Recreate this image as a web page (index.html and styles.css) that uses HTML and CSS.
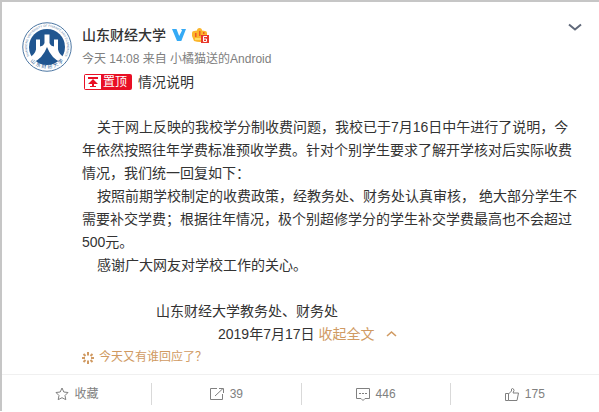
FILE: index.html
```
<!DOCTYPE html>
<html lang="zh-CN">
<head>
  <meta charset="UTF-8">
  <meta name="viewport" content="width=device-width, initial-scale=1">
  <title>山东财经大学</title>
  <link rel="stylesheet" href="styles.css">
</head>
<body>

  <article class="card">
    <div class="feed">
      <a class="avatar" href="#" aria-label="山东财经大学">
        <svg width="50" height="50" viewBox="0 0 100 100">
          <defs>
            <path id="ring-top" d="M15 69A40 40 0 1 1 85 69"/>
            <path id="ring-bottom" d="M8 64A45 45 0 0 0 92 64"/>
          </defs>
          <circle cx="50" cy="50" r="48.500" fill="#fff" stroke="#4d77a3" stroke-width="2"/>
          <circle cx="50" cy="50" r="36" fill="#205690"/>
          <path fill="#fff" d="M45 25h10v17q2 6 9 7V35h8v20q2 10 14 17l-7 10Q58 72 50 50 42 72 21 82l-7-10q12-7 14-17V35h8v14q7-1 9-7z"/>
          <text class="seal-en"><textPath href="#ring-top" startOffset="50%">SHANDONG UNIVERSITY OF FINANCE AND ECONOMICS</textPath></text>
          <text class="seal-cn"><textPath href="#ring-bottom" startOffset="50%">山 东 财 经 大 学</textPath></text>
        </svg>
      </a>

      <div class="detail">
        <header class="author">
          <a class="name" href="#">山东财经大学</a>
          <svg class="verified" width="14" height="12" viewBox="0 0 14 12">
            <path fill="#35aaf5" d="M0 0h4.500l2.700 7L10 1.500 9 0h5L9.300 12H5z"/>
          </svg>
          <svg class="crown" width="17" height="15" viewBox="0 0 17 15">
            <path fill="#fbb62c" d="M2 13 0 8V5q0-2 2-2l3-.500Q5 0 7.500 0T10 2.500l3 .500q2 0 2 2v3l-2 5q-5 2-11 0z"/>
            <path fill="#ef5a25" d="M3 5h1.500v4H3zM7 3h1.500v5H7zM11 4h1.500v2H11z"/>
            <path fill="#ffdc65" d="M3 10h6v2H3z"/>
            <path fill="#e8392c" d="M9 7h8v8H9z"/>
            <path fill="none" stroke="#fff" d="M15 8.500h-3.500v5h3v-2.500h-3"/>
          </svg>
          <button class="more" type="button" aria-label="更多">
            <svg width="14" height="9" viewBox="0 0 14 9">
              <path fill="none" stroke="#60697a" stroke-width="2" d="M1 1.500l6 5 6-5"/>
            </svg>
          </button>
        </header>

        <p class="meta"><a href="#">今天 14:08</a> 来自 <a href="#">小橘猫送的Android</a></p>

        <div class="content">
          <h1 class="title">
            <span class="pinned">
              <svg width="16" height="14" viewBox="0 0 16 14">
                <path fill="#fff" d="M0 0h16v14H0z"/>
                <path fill="#e90f25" d="M3 2h10v2H3zM8 4l5 5H9v2h2v1H5v-1h2V9H3z"/>
              </svg>
              <span class="pinned-text">置顶</span>
            </span>
            情况说明
          </h1>
          <p>关于网上反映的我校学分制收费问题，我校已于7月16日中午进行了说明，今年依然按照往年学费标准预收学费。针对个别学生要求了解开学核对后实际收费情况，我们统一回复如下：</p>
          <p>按照前期学校制定的收费政策，经教务处、财务处认真审核， 绝大部分学生不需要补交学费；根据往年情况，极个别超修学分的学生补交学费最高也不会超过500元。</p>
          <p>感谢广大网友对学校工作的关心。</p>
          <p class="signature">山东财经大学教务处、财务处</p>
          <p class="date">2019年7月17日
            <a class="fold" href="#">收起全文
              <svg width="11" height="7" viewBox="0 0 11 7">
                <path fill="none" stroke="#d09a62" stroke-width="1.600" d="M1 6l4.500-4L10 6"/>
              </svg>
            </a>
          </p>
        </div>

        <a class="replies" href="#">
          <svg width="12" height="12" viewBox="0 0 12 12">
            <path fill="none" stroke="#d09a62" stroke-width="2" d="M6 0v3.500M6 8.500V12M1.500 2l2 2M10.500 2l-2 2M0 6h3M9 6h3M1.500 10l2-2M10.500 10l-2-2"/>
          </svg>
          今天又有谁回应了？
        </a>
      </div>
    </div>

    <footer class="actions">
      <button type="button">
        <svg width="14" height="14" viewBox="0 0 14 14">
          <path d="M7 1l1.800 4 4.200.500-3 3 .800 4.200L7 10.700l-3.800 2L4 8.500l-3-3L5.200 5z"/>
        </svg>
        收藏
      </button>
      <button type="button" aria-label="转发 39">
        <svg width="14" height="12" viewBox="0 0 14 12">
          <path d="M7 .500H.500v11h12V6M5 8l8-7.500M9 .500h4.500V5"/>
        </svg>
        39
      </button>
      <button type="button" aria-label="评论 446">
        <svg width="14" height="13" viewBox="0 0 14 13">
          <path d="M.500.500h13v10H9l-2 2-2-2H.500zM3 5.500h2M6 5.500h2M9 5.500h2"/>
        </svg>
        446
      </button>
      <button type="button" aria-label="赞 175">
        <svg width="14" height="13" viewBox="0 0 14 13">
          <path d="M.500 5.500h3v7h-3zM3.500 6l3-3V1q1-1 2 0l.500 1.500L8 5h5.500L12 12.500H3.500"/>
        </svg>
        175
      </button>
    </footer>
  </article>

</body>
</html>
```
FILE: styles.css
```
* {
  box-sizing: border-box;
}

body {
  margin: 0;
  font-family: "Liberation Sans", "Noto Sans CJK SC", sans-serif;
  font-size: 14px;
  line-height: 23px;
  color: #333;
  background-color: #fff;
}

a {
  color: inherit;
  text-decoration: none;
}

button {
  padding: 0;
  border: 0;
  background: none;
  font: inherit;
  color: inherit;
  cursor: pointer;
}

h1, p {
  margin: 0;
}

svg {
  flex: none;
  overflow: visible;
}

.card {
  border-top: 2px solid #c6c6c6;
  border-left: 2px solid #c6c6c6;
}

.feed {
  display: flex;
  gap: 10px;
  padding: 20px 17px 5px 20px;
}

.avatar {
  flex: none;
  width: 50px;
  height: 50px;
}

.seal-en,
.seal-cn {
  text-anchor: middle;
}

.seal-en {
  font-size: 6px;
  fill: #5479a3;
}

.seal-cn {
  font-size: 10px;
  fill: #205690;
}

.detail {
  flex: 1;
  min-width: 0;
}

.author {
  display: flex;
  align-items: center;
  height: 26px;
}

.name {
  font-weight: 500;
}

.verified {
  margin-left: 6px;
}

.crown {
  margin-left: 6px;
}

.more {
  display: flex;
  margin-left: auto;
  margin-bottom: 16px;
}

.meta {
  font-size: 12px;
  color: #808080;
}

.title {
  display: flex;
  align-items: center;
  gap: 6px;
  margin-bottom: 23px;
  padding-left: 2px;
  font-size: 14px;
  font-weight: 400;
  line-height: 22px;
}

.pinned {
  display: flex;
  align-items: center;
  gap: 2px;
  height: 16px;
  padding: 1px 5px 1px 1px;
  border-radius: 2px;
  background-color: #e90f25;
  color: #fff;
  font-size: 12px;
}

.content p {
  text-indent: 15px;
}

.content .signature {
  margin-top: 23px;
  text-indent: 74px;
}

.content .date {
  text-indent: 136px;
}

.fold {
  color: #d09a62;
}

.fold svg {
  margin-left: 8px;
  vertical-align: 2px;
}

.replies {
  display: flex;
  align-items: center;
  gap: 5px;
  font-size: 12px;
  color: #d09a62;
}

.actions {
  display: grid;
  grid-template-columns: repeat(4, 1fr);
  padding: 8px 0 6px;
  border-top: 1px solid #f0f0f0;
  font-size: 12px;
  color: #808080;
}

.actions button {
  display: flex;
  justify-content: center;
  align-items: center;
  gap: 6px;
  height: 22px;
}

.actions button + button {
  border-left: 1px solid #d9d9d9;
}

.actions svg {
  fill: none;
  stroke: #808080;
}
```
